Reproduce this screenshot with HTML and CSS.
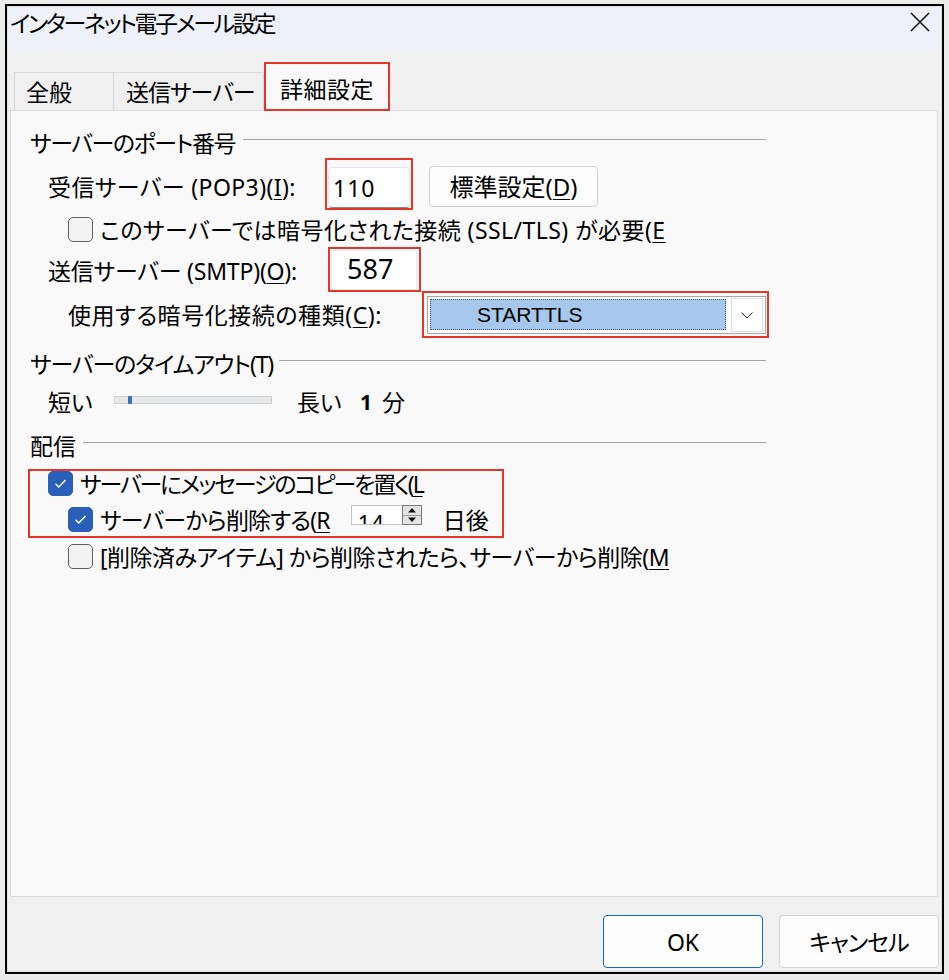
FILE: index.html
```html
<!DOCTYPE html>
<html lang="ja">
<head>
<meta charset="utf-8">
<title>インターネット電子メール設定</title>
<link rel="stylesheet" href="styles.css">
</head>
<body>
<div class="dialog">
  <div class="frame">
    <div class="titlebar">
      <span class="title">インターネット電子メール設定</span>
      <svg class="close" width="20" height="20" viewBox="0 0 20 20"><path d="M1 1L19 19M19 1L1 19" stroke="#1a1a1a" stroke-width="1.6" fill="none"/></svg>
    </div>
    <div class="tabs">
      <div class="tab t1">全般</div>
      <div class="tab t2">送信サーバー</div>
      <div class="tab t3 active">詳細設定</div>
    </div>
    <div class="panel">
      <div class="gh gh-port"><span>サーバーのポート番号</span><span class="line"></span></div>

      <div class="row row-pop">
        <span class="lbl lbl-pop">受信サーバー (POP3)(<u>I</u>):</span>
        <span class="anno anno-pop"><span class="tb tb-pop">110</span></span>
        <span class="btn btn-std">標準設定(<u>D</u>)</span>
      </div>

      <div class="row row-chk ind2 row-ssl">
        <span class="cb"></span>
        <span class="ct ct-ssl">このサーバーでは暗号化された接続 (SSL/TLS) が必要(<u>E</u></span>
      </div>

      <div class="row row-smtp">
        <span class="lbl lbl-smtp">送信サーバー (SMTP)(<u>O</u>):</span>
        <span class="anno anno-smtp"><span class="tb tb-smtp">587</span></span>
      </div>

      <div class="row row-enc">
        <span class="lbl lbl-enc">使用する暗号化接続の種類(<u>C</u>):</span>
        <span class="anno anno-enc">
          <span class="combo">
            <span class="sel">STARTTLS</span>
            <span class="drop"><svg width="12" height="7" viewBox="0 0 12 7"><path d="M0.5 0.5L6 6L11.5 0.5" stroke="#333" stroke-width="1" fill="none"/></svg></span>
          </span>
        </span>
      </div>

      <div class="gh gh-to"><span>サーバーのタイムアウト(T)</span><span class="line"></span></div>

      <div class="row row-slider">
        <span class="lbl s-short">短い</span>
        <span class="track"><span class="thumb"></span></span>
        <span class="lbl s-long">長い</span>
        <span class="lbl s-num">1</span>
        <span class="lbl">分</span>
      </div>

      <div class="gh gh-del"><span>配信</span><span class="line"></span></div>

      <div class="anno anno-del">
        <div class="row row-chk ind1">
          <span class="cb on"><svg width="23" height="23" viewBox="0 0 23 23"><path d="M6.5 11.8L9.8 15L16.5 8" stroke="#fff" stroke-width="1.4" fill="none"/></svg></span>
          <span class="ct ct-l">サーバーにメッセージのコピーを置く(<u>L</u></span>
        </div>
        <div class="row row-chk ind2 row-r">
          <span class="cb on"><svg width="23" height="23" viewBox="0 0 23 23"><path d="M6.5 11.8L9.8 15L16.5 8" stroke="#fff" stroke-width="1.4" fill="none"/></svg></span>
          <span class="ct ct-r">サーバーから削除する(<u>R</u></span>
          <span class="spin">
            <span class="spin-val">14</span>
            <span class="spin-btns">
              <span class="sb"><svg width="10" height="6" viewBox="0 0 10 6"><path d="M1 5.5L5 1L9 5.5Z" fill="#111"/></svg></span>
              <span class="sb"><svg width="10" height="6" viewBox="0 0 10 6"><path d="M1 0.5L5 5L9 0.5Z" fill="#111"/></svg></span>
            </span>
          </span>
          <span class="days">日後</span>
        </div>
      </div>

      <div class="row row-chk ind2 row-m">
        <span class="cb"></span>
        <span class="ct ct-m">[削除済みアイテム] から削除されたら、サーバーから削除(<u>M</u></span>
      </div>
    </div>
    <div class="footer">
      <span class="btn btn-ok">OK</span>
      <span class="btn btn-cancel">キャンセル</span>
    </div>
  </div>
</div>
</body>
</html>
```

FILE: styles.css
```css
* { box-sizing: border-box; }
html, body { margin: 0; padding: 0; }
body {
  background: #ececec;
  font-family: "Noto Sans", "Noto Sans CJK JP", sans-serif;
  font-size: 23px;
  line-height: 24px;
  color: #000;
  font-feature-settings: "palt";
  letter-spacing: -1px;
  width: 949px;
  height: 980px;
  overflow: hidden;
}
u { text-decoration: underline; text-underline-offset: 3px; text-decoration-thickness: 1px; }

.dialog {
  margin: 4px 0 0 5px;
  width: 939px;
  height: 970px;
  border: 2px solid #000;
}
.frame {
  height: 100%;
  border: 1px solid #dedede;
  background: #f0f0f0;
  display: flex;
  flex-direction: column;
}

/* title bar */
.titlebar {
  height: 43px;
  flex: none;
  background: #eff1f8;
  display: flex;
  align-items: flex-start;
  padding-left: 2px;
}
.title { margin-top: 4px; font-size: 23px; line-height: 24px; letter-spacing: -2.4px; }
.close { margin-left: auto; margin-right: 11px; margin-top: 5px; }

/* tabs */
.tabs {
  height: 60px;
  flex: none;
  display: flex;
  align-items: flex-end;
  padding-left: 6px;
  position: relative;
  z-index: 1;
}
.tab {
  height: 38px;
  border: 1px solid #dadada;
  border-bottom: none;
  background: #f0f0f0;
  padding-top: 7px;
  line-height: 24px;
}
.t1 { width: 100px; padding-left: 11px; letter-spacing: 0; }
.t2 { width: 150px; padding-left: 12px; border-left: none; }
.t3 {
  width: 126px;
  height: 49px;
  margin-bottom: -1px;
  border: 2px solid #e4372b;
  background: #f9f9f9;
  padding-left: 14px;
  padding-top: 13px;
  letter-spacing: 0.5px;
}

/* panel */
.panel {
  flex: 1;
  margin: 0 3px 0 2px;
  background: #f9f9f9;
  border: 1px solid #dcdcdc;
  padding-left: 19px;
  padding-top: 1px;
}
.gh {
  display: flex;
  width: 736px;
  height: 24px;
  margin-top: 19px;
}
.gh .line {
  flex: 1;
  border-top: 1px solid #a3a3a3;
  margin-top: 8px;
  margin-left: 8px;
}
.gh-port span:first-child { letter-spacing: -1.4px; }
.gh-to { margin-top: 18px; }
.gh-to span:first-child { letter-spacing: -1.1px; }
.gh-to .line { margin-left: 6px; }
.gh-del { margin-top: 20px; }
.gh-del span:first-child { letter-spacing: 0; }
.gh-del .line { margin-left: 7px; }

.row { display: flex; align-items: center; }
.lbl { white-space: nowrap; flex: none; }

.anno { border: 2px solid #e4372b; flex: none; }

/* POP3 row */
.row-pop { margin-top: 11px; height: 41px; }
.lbl-pop { width: 280px; margin-left: 18px; letter-spacing: 0.4px; }
.anno-pop { display: block; padding: 7px 1px 0 1px; margin: -8px -3px -3px -3px; }
.tb {
  display: block;
  background: #fff;
  border: 1px solid #e6e6e6;
  border-radius: 4px;
  letter-spacing: 0;
}
.tb-pop {
  width: 82px;
  height: 41px;
  border-bottom: 1px solid #8a8a8a;
  font-size: 23px;
  line-height: 40px;
  padding-left: 4px;
  letter-spacing: 1px;
}
.btn {
  display: flex;
  align-items: center;
  justify-content: center;
  background: #fdfdfd;
  border: 1px solid #d3d3d3;
  border-radius: 4px;
  flex: none;
  letter-spacing: 0;
  padding-top: 1px;
}
.btn-std { margin-left: 19px; width: 169px; height: 41px; font-size: 24px; }

/* checkbox rows */
.row-chk { height: 25px; }
.ind1 .cb { margin-left: 18px; }
.ind2 .cb { margin-left: 38px; }
.cb {
  width: 25px;
  height: 25px;
  flex: none;
  border: 1px solid #5f5f5f;
  border-radius: 5px;
  background: #f3f3f3;
  display: flex;
}
.cb.on { background: #2a5fb9; border-color: #2a5fb9; }
.ct { margin-left: 7px; white-space: nowrap; padding-top: 1px; }
.ct-ssl { letter-spacing: 0.45px; }
.ct-l { letter-spacing: -2.1px; }
.ct-r { letter-spacing: -0.8px; }
.ct-m { letter-spacing: -0.5px; }
.row-ssl { margin-top: 10px; }

/* SMTP row */
.row-smtp { margin-top: 8px; height: 42px; }
.lbl-smtp { width: 283px; margin-left: 18px; letter-spacing: -0.2px; }
.anno-smtp { display: block; padding: 1px 2px 0 1px; margin: -4px -4px -1px -3px; }
.tb-smtp {
  width: 86px;
  height: 40px;
  border-radius: 2px;
  border-color: #ececec;
  font-size: 27px;
  line-height: 36px;
  padding-left: 15px;
}

/* encryption row */
.row-enc { margin-top: 4px; height: 38px; }
.lbl-enc { width: 359px; margin-left: 38px; letter-spacing: 0.55px; }
.anno-enc { display: block; padding: 3px 1px 2px 3px; margin: -5px -3px -4px -5px; }
.combo {
  display: flex;
  width: 339px;
  height: 38px;
  border: 1px solid #a7a7a7;
  background: #fff;
  padding: 2px;
}
.sel {
  width: 297px;
  height: 31px;
  background: #a5c8ec;
  border: 1px dotted #3d4f66;
  font-family: "Liberation Sans", Arial, sans-serif;
  font-feature-settings: normal;
  letter-spacing: 0;
  font-size: 21px;
  line-height: 29px;
  padding-left: 46px;
  color: #000;
}
.drop {
  margin-left: 5px;
  margin-top: -1px;
  width: 32px;
  height: 34px;
  border: 1px solid #dcdcdc;
  background: #fff;
  display: flex;
  align-items: center;
  justify-content: center;
}

/* slider row */
.row-slider { margin-top: 14px; height: 24px; }
.s-short { width: 66px; margin-left: 18px; letter-spacing: 0; }
.track {
  width: 158px;
  height: 8px;
  border: 1px solid #cfcfcf;
  background: #e7e8e9;
  align-self: flex-start;
  margin-top: 6px;
  display: flex;
  flex: none;
}
.thumb { width: 4px; height: 8px; margin-left: 13px; margin-top: -1px; background: #3a6ec5; border-radius: 1px; }
.s-long { width: 63px; margin-left: 25px; letter-spacing: 0; }
.s-num { width: 22px; font-weight: bold; font-size: 21px; letter-spacing: 0; }

/* delivery */
.anno-del {
  margin-top: 11px;
  margin-left: -2px;
  width: 476px;
  padding-bottom: 4px;
}
.row-r { margin-top: 11px; }
.spin {
  margin-left: 21px;
  width: 71px;
  height: 20px;
  align-self: flex-start;
  margin-top: -2px;
  display: flex;
  flex: none;
}
.spin-val {
  flex: 1;
  height: 20px;
  overflow: hidden;
  background: #fff;
  border: 1px solid #c4c4c4;
  border-right: none;
  font-size: 22px;
  line-height: 20px;
  padding-top: 6px;
  padding-left: 6px;
  letter-spacing: 1px;
}
.spin-btns {
  width: 20px;
  height: 20px;
  border: 1px solid #7a7a7a;
  background: #e3e3e3;
  display: flex;
  flex-direction: column;
}
.sb { flex: 1; display: flex; align-items: center; justify-content: center; }
.sb + .sb { border-top: 1px solid #9a9a9a; }
.days { margin-left: 21px; white-space: nowrap; letter-spacing: 0; padding-top: 1px; }
.row-m { margin-top: 6px; }

/* footer */
.footer {
  height: 74px;
  flex: none;
  display: flex;
  justify-content: flex-end;
  align-items: flex-start;
  padding-top: 18px;
  padding-right: 2px;
  gap: 16px;
}
.btn-ok, .btn-cancel { width: 160px; height: 53px; font-size: 23px; }
.btn-cancel { letter-spacing: -1px; }
.btn-ok { border-color: #1a66c2; }
```
